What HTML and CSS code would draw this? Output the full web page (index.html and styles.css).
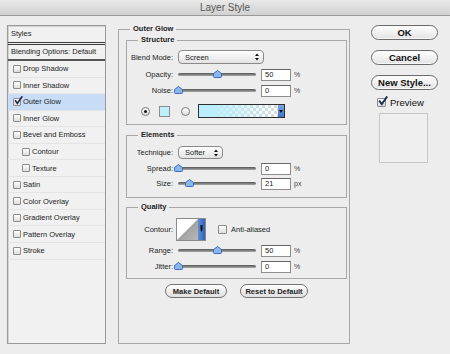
FILE: index.html
```html
<!DOCTYPE html>
<html lang="en">

<head>
  <meta charset="UTF-8">
  <title>Layer Style</title>
  <link rel="stylesheet" href="styles.css">
</head>

<body>
  <div class="titlebar">Layer Style</div>

  <div class="dialog">
    <div class="styles-list">
      <div class="styles-head">Styles</div>
      <div class="styles-blend">Blending Options: Default</div>
      <div class="style-item"><span class="check"></span>Drop Shadow</div>
      <div class="style-item"><span class="check"></span>Inner Shadow</div>
      <div class="style-item active">
        <span class="check">
          <svg class="tick" viewBox="0 0 10 10"><path d="M1.2 4.6 L3.8 8.2 L9.2 0.4" /></svg>
        </span>Outer Glow
      </div>
      <div class="style-item"><span class="check"></span>Inner Glow</div>
      <div class="style-item"><span class="check"></span>Bevel and Emboss</div>
      <div class="style-item sub"><span class="check"></span>Contour</div>
      <div class="style-item sub"><span class="check"></span>Texture</div>
      <div class="style-item"><span class="check"></span>Satin</div>
      <div class="style-item"><span class="check"></span>Color Overlay</div>
      <div class="style-item"><span class="check"></span>Gradient Overlay</div>
      <div class="style-item"><span class="check"></span>Pattern Overlay</div>
      <div class="style-item"><span class="check"></span>Stroke</div>
    </div>

    <fieldset class="outer">
      <legend>Outer Glow</legend>

      <fieldset class="group structure">
        <legend>Structure</legend>
        <div class="row row-select">
          <label class="lbl">Blend Mode:</label>
          <div class="select select-blend">Screen
            <svg class="arrows" viewBox="0 0 5 9"><path d="M2.5 0 L5 3.4 H0 Z M2.5 9 L5 5.6 H0 Z" /></svg>
          </div>
        </div>
        <div class="row row-slider first">
          <label class="lbl">Opacity:</label>
          <div class="slider"><div class="track"></div>
            <svg class="thumb" style="left: 50%" viewBox="0 0 9 8"><path d="M4.5 0.5 L8.5 3.6 V6.6 Q8.5 7.5 7.6 7.5 H1.4 Q0.5 7.5 0.5 6.6 V3.6 Z" /></svg>
          </div>
          <div class="num">50</div><span class="unit">%</span>
        </div>
        <div class="row row-slider">
          <label class="lbl">Noise:</label>
          <div class="slider"><div class="track"></div>
            <svg class="thumb" style="left: 0%" viewBox="0 0 9 8"><path d="M4.5 0.5 L8.5 3.6 V6.6 Q8.5 7.5 7.6 7.5 H1.4 Q0.5 7.5 0.5 6.6 V3.6 Z" /></svg>
          </div>
          <div class="num">0</div><span class="unit">%</span>
        </div>
        <div class="row row-color">
          <span class="radio on"></span>
          <span class="swatch"></span>
          <span class="radio second"></span>
          <div class="gradient">
            <div class="grad-fill"></div>
            <div class="grad-drop">
              <svg viewBox="0 0 4 3"><path d="M0 0 H4 L2 3 Z" /></svg>
            </div>
          </div>
        </div>
      </fieldset>

      <fieldset class="group elements">
        <legend>Elements</legend>
        <div class="row row-select small">
          <label class="lbl">Technique:</label>
          <div class="select select-tech">Softer
            <svg class="arrows" viewBox="0 0 5 9"><path d="M2.5 0 L5 3.4 H0 Z M2.5 9 L5 5.6 H0 Z" /></svg>
          </div>
        </div>
        <div class="row row-slider">
          <label class="lbl">Spread:</label>
          <div class="slider"><div class="track"></div>
            <svg class="thumb" style="left: 0%" viewBox="0 0 9 8"><path d="M4.5 0.5 L8.5 3.6 V6.6 Q8.5 7.5 7.6 7.5 H1.4 Q0.5 7.5 0.5 6.6 V3.6 Z" /></svg>
          </div>
          <div class="num">0</div><span class="unit">%</span>
        </div>
        <div class="row row-slider tight">
          <label class="lbl">Size:</label>
          <div class="slider"><div class="track"></div>
            <svg class="thumb" style="left: 14%" viewBox="0 0 9 8"><path d="M4.5 0.5 L8.5 3.6 V6.6 Q8.5 7.5 7.6 7.5 H1.4 Q0.5 7.5 0.5 6.6 V3.6 Z" /></svg>
          </div>
          <div class="num">21</div><span class="unit">px</span>
        </div>
      </fieldset>

      <fieldset class="group quality">
        <legend>Quality</legend>
        <div class="row row-contour">
          <label class="lbl">Contour:</label>
          <div class="contour">
            <svg class="contour-curve" viewBox="0 0 21 21" preserveAspectRatio="none">
              <defs>
                <linearGradient id="cg" x1="0" y1="0" x2="1" y2="1">
                  <stop offset="0" stop-color="#8a8a8a" />
                  <stop offset="1" stop-color="#b9b9b9" />
                </linearGradient>
              </defs>
              <rect width="21" height="21" fill="#fff" />
              <path d="M0 21 L21 0 V21 Z" fill="url(#cg)" />
            </svg>
            <div class="contour-drop">
              <svg viewBox="0 0 3 9"><path d="M0.5 0 H2.5 V5 L1.5 7 L0.5 5 Z" /></svg>
            </div>
          </div>
          <span class="check aa"></span><span class="aa-text">Anti-aliased</span>
        </div>
        <div class="row row-slider">
          <label class="lbl">Range:</label>
          <div class="slider"><div class="track"></div>
            <svg class="thumb" style="left: 50%" viewBox="0 0 9 8"><path d="M4.5 0.5 L8.5 3.6 V6.6 Q8.5 7.5 7.6 7.5 H1.4 Q0.5 7.5 0.5 6.6 V3.6 Z" /></svg>
          </div>
          <div class="num">50</div><span class="unit">%</span>
        </div>
        <div class="row row-slider">
          <label class="lbl">Jitter:</label>
          <div class="slider"><div class="track"></div>
            <svg class="thumb" style="left: 0%" viewBox="0 0 9 8"><path d="M4.5 0.5 L8.5 3.6 V6.6 Q8.5 7.5 7.6 7.5 H1.4 Q0.5 7.5 0.5 6.6 V3.6 Z" /></svg>
          </div>
          <div class="num">0</div><span class="unit">%</span>
        </div>
      </fieldset>

      <div class="actions">
        <button class="btn btn-make">Make Default</button>
        <button class="btn btn-reset">Reset to Default</button>
      </div>
    </fieldset>

    <div class="side">
      <button class="pill">OK</button>
      <button class="pill">Cancel</button>
      <button class="pill">New Style...</button>
      <div class="preview">
        <span class="check big">
          <svg class="tick" viewBox="0 0 10 10"><path d="M1.2 4.6 L3.8 8.2 L9.2 0.4" /></svg>
        </span>Preview
      </div>
      <div class="preview-box"></div>
    </div>
  </div>
</body>

</html>
```

FILE: styles.css
```css
    body {
      margin: 0;
      width: 450px;
      height: 354px;
      overflow: hidden;
      background-color: #ededed;
      font-family: "Liberation Sans", Arial, sans-serif;
      font-size: 7.5px;
      color: #1c1c1c;
    }

    .titlebar {
      height: 15px;
      line-height: 15px;
      border-bottom: 1px solid #9a9a9a;
      background: linear-gradient(#e9e9e9, #d1d1d1);
      text-align: center;
      font-size: 10px;
      color: #555;
    }

    .dialog {
      display: flex;
      align-items: flex-start;
      padding-left: 7px;
    }

    /* left list of effects */
    .styles-list {
      margin-top: 9px;
      width: 99px;
      height: 319px;
      box-sizing: border-box;
      border: 1px solid #999;
      box-shadow: inset 1px 1px 0 #d2d2d2;
      background-color: #f1f1f1;
    }

    .styles-head {
      height: 16px;
      line-height: 16px;
      padding-left: 3px;
      border-bottom: 3px double #3a3a3a;
    }

    .styles-blend {
      height: 14px;
      line-height: 14px;
      padding-left: 3px;
      border-bottom: 2px solid #555;
    }

    .style-item {
      height: 16.55px;
      box-sizing: border-box;
      border-bottom: 1px solid #e4e4e4;
      display: flex;
      align-items: center;
      gap: 2px;
      padding-left: 5px;
    }

    .style-item.sub {
      padding-left: 14px;
    }

    .style-item.active {
      background-color: #c8dcf6;
    }

    .check {
      position: relative;
      flex: none;
      width: 8px;
      height: 8px;
      box-sizing: border-box;
      border: 1px solid #8c8c8c;
      border-radius: 1px;
      background: linear-gradient(#fff, #dcdcdc);
    }

    .tick {
      position: absolute;
      left: 0;
      top: -3px;
      width: 9px;
      height: 9px;
      fill: none;
      stroke: #1b2a4c;
      stroke-width: 1.9;
    }

    /* main group boxes */
    .outer {
      margin: 8px 0 0 12px;
      width: 232px;
      min-width: 0;
      box-sizing: border-box;
      padding: 1px 2px 45px 7px;
      border: 1px solid #a8a8a8;
    }

    fieldset > legend {
      font-weight: bold;
      line-height: 10px;
      padding: 0 3px;
      margin-left: 4px;
    }

    .group {
      width: 100%;
      min-width: 0;
      box-sizing: border-box;
      margin: 0 0 5px;
      padding: 5px 3px 6px 0;
      border: 1px solid #a8a8a8;
    }

    .group > legend {
      margin-left: 11px;
    }

    .elements {
      padding: 6px 3px 7px 0;
      margin-bottom: 4px;
    }

    .quality {
      padding: 6px 3px 5px 0;
    }

    .row {
      display: flex;
      align-items: center;
    }

    .lbl {
      width: 46px;
      margin-right: 5px;
      text-align: right;
    }

    .row-select {
      height: 14px;
    }

    .row-select.small {
      height: 13px;
    }

    .select {
      display: flex;
      align-items: center;
      justify-content: space-between;
      box-sizing: border-box;
      height: 100%;
      padding: 0 4px 0 6px;
      border: 1px solid #8a8a8a;
      border-radius: 4px;
      background: linear-gradient(#fff, #e2e2e2);
    }

    .select-blend {
      width: 86px;
    }

    .select-tech {
      width: 45px;
    }

    .arrows {
      width: 4px;
      height: 8px;
      fill: #111;
    }

    .row-slider {
      height: 13px;
      margin-top: 3px;
    }

    .row-slider.first {
      margin-top: 4px;
    }

    .row-slider.tight {
      margin-top: 2px;
    }

    .slider {
      position: relative;
      display: flex;
      align-items: center;
      width: 78px;
      height: 13px;
      margin-right: 5px;
    }

    .track {
      width: 100%;
      height: 3px;
      border-radius: 2px;
      background: linear-gradient(#555, #a8a8a8);
    }

    .thumb {
      position: absolute;
      top: 1.5px;
      width: 9px;
      height: 8px;
      margin-left: -4px;
      fill: #8cb6ee;
      stroke: #3b6bb8;
      stroke-width: 1;
    }

    .num {
      width: 30px;
      height: 12px;
      box-sizing: border-box;
      padding-left: 3px;
      line-height: 10px;
      border: 1px solid #8d8d8d;
      border-top-color: #666;
      background-color: #fff;
    }

    .unit {
      margin-left: 3px;
      font-size: 7px;
      color: #444;
    }

    /* color row */
    .row-color {
      height: 14px;
      margin-top: 7px;
      padding-left: 14px;
    }

    .radio {
      display: flex;
      align-items: center;
      justify-content: center;
      width: 9px;
      height: 9px;
      box-sizing: border-box;
      border: 1px solid #777;
      border-radius: 50%;
      background: linear-gradient(#fff, #dedede);
    }

    .radio.on::after {
      content: "";
      width: 3px;
      height: 3px;
      border-radius: 50%;
      background-color: #111;
    }

    .radio.second {
      margin-left: 11px;
    }

    .swatch {
      width: 11px;
      height: 11px;
      box-sizing: border-box;
      margin-left: 9px;
      border: 1px solid #8d8d8d;
      background-color: #bdf0fa;
    }

    .gradient {
      display: flex;
      width: 87px;
      height: 14px;
      box-sizing: border-box;
      margin-left: 8px;
      border: 1px solid #2e2e2e;
    }

    .grad-fill {
      flex: 1;
      background:
        linear-gradient(to right, #b9eefa 15%, rgba(185, 238, 250, 0)),
        repeating-conic-gradient(#d9d9d9 0 25%, #fff 0 50%) 0 0 / 6px 6px;
    }

    .grad-drop {
      display: flex;
      align-items: center;
      justify-content: center;
      width: 6px;
      background: linear-gradient(#79a6e6, #3f74c9);
    }

    .grad-drop svg {
      width: 4px;
      height: 3px;
      fill: #111;
    }

    /* quality */
    .row-contour {
      height: 23px;
    }

    .contour {
      display: flex;
      width: 30px;
      height: 23px;
      box-sizing: border-box;
      margin-left: -2px;
      border: 1px solid #8a8a8a;
      background-color: #fff;
    }

    .contour-curve {
      width: 21px;
      height: 21px;
    }

    .contour-drop {
      display: flex;
      align-items: center;
      justify-content: center;
      flex: 1;
      background: linear-gradient(to right, #5f90dc, #2f62b8);
    }

    .contour-drop svg {
      width: 3px;
      height: 9px;
      fill: #111;
    }

    .check.aa {
      margin-left: 12px;
      width: 9px;
      height: 9px;
    }

    .aa-text {
      margin-left: 4px;
    }

    .actions {
      display: flex;
      justify-content: center;
      gap: 13px;
    }

    .btn {
      height: 14px;
      padding: 0;
      border: 1px solid #727272;
      border-radius: 7px;
      background: linear-gradient(#fdfdfd, #e0e0e0);
      font-family: "Liberation Sans", Arial, sans-serif;
      font-size: 7.5px;
      font-weight: bold;
      color: #222;
    }

    .btn-make {
      width: 62px;
    }

    .btn-reset {
      width: 68px;
    }

    /* right column */
    .side {
      display: flex;
      flex-direction: column;
      margin: 9px 0 0 21px;
      width: 67px;
    }

    .pill {
      width: 67px;
      height: 15px;
      padding: 0;
      margin-bottom: 9px;
      border: 1px solid #6c6c6c;
      border-radius: 8px;
      background: linear-gradient(#ffffff, #e3e3e3);
      box-shadow: inset 0 0 0 1px #f7f7f7;
      font-family: "Liberation Sans", Arial, sans-serif;
      font-size: 9.5px;
      font-weight: bold;
      color: #111;
    }

    .pill + .pill {
      margin-top: 1px;
    }

    .preview {
      display: flex;
      align-items: center;
      height: 10px;
      margin: -2px 0 0 6px;
      font-size: 9.5px;
      color: #111;
    }

    .check.big {
      width: 9px;
      height: 9px;
      margin-right: 4px;
    }

    .check.big .tick {
      width: 10px;
      height: 10px;
      top: -3px;
    }

    .preview-box {
      margin: 6px 0 0 8px;
      width: 49px;
      height: 50px;
      box-sizing: border-box;
      border: 1px solid #c6c6c6;
      background-color: #efefef;
    }
```
